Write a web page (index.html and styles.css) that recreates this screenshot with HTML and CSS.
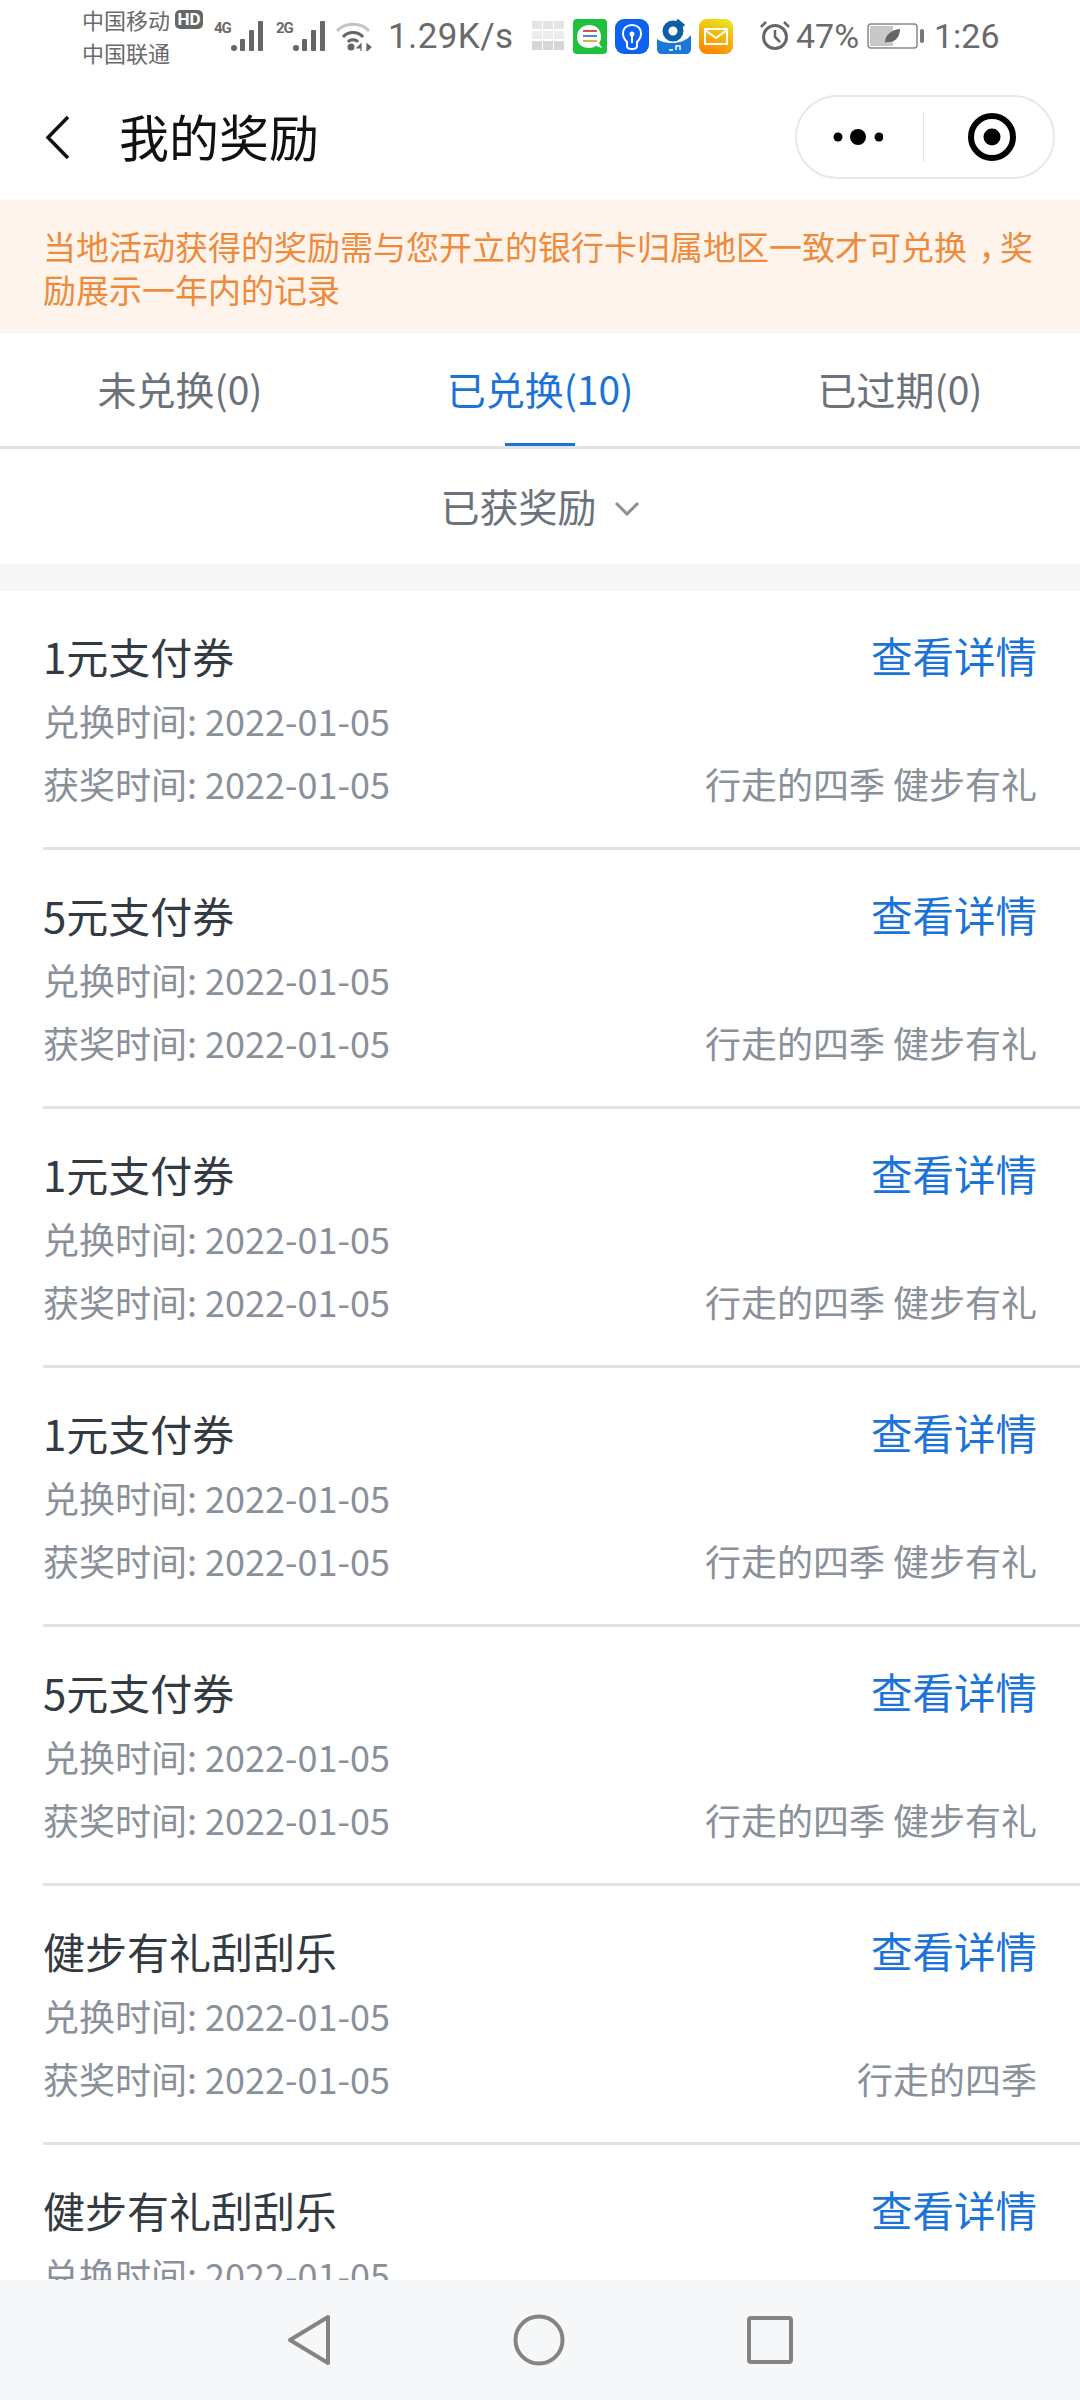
FILE: index.html
```html
<!DOCTYPE html>
<html lang="zh-CN">

<head>
    <meta charset="UTF-8">
    <meta name="viewport" content="width=device-width, initial-scale=1.0">
    <title>我的奖励</title>
    <link rel="stylesheet" href="styles.css">
</head>

<body>
    <div class="page">
        <div class="status-bar">
            <div class="carriers">
                <div class="carrier-row">中国移动<span class="hd">HD</span></div>
                <div class="carrier-row">中国联通</div>
            </div>
            <div class="signal">
                <span class="net">4G</span>
                <svg width="33" height="30" viewBox="0 0 33 30" fill="#666">
                    <circle cx="3" cy="27" r="3"/>
                    <rect x="9" y="18" width="5" height="12" rx="1"/>
                    <rect x="18" y="9" width="5" height="21" rx="1"/>
                    <rect x="27" y="0" width="5" height="30" rx="1"/>
                </svg>
            </div>
            <div class="signal">
                <span class="net">2G</span>
                <svg width="33" height="30" viewBox="0 0 33 30" fill="#666">
                    <circle cx="3" cy="27" r="3"/>
                    <rect x="9" y="18" width="5" height="12" rx="1"/>
                    <rect x="18" y="9" width="5" height="21" rx="1"/>
                    <rect x="27" y="0" width="5" height="30" rx="1"/>
                </svg>
            </div>
            <svg class="wifi" width="37" height="30" viewBox="0 0 37 30" fill="none">
                <path d="M2 10 C10 1 26 1 34 10" stroke="#c4c4c4" stroke-width="3"/>
                <path d="M8 16 C13 10 23 10 28 16" stroke="#666" stroke-width="3"/>
                <path d="M13 21 C15 18 21 18 23 21" stroke="#666" stroke-width="3"/>
                <circle cx="16" cy="26" r="3.5" fill="#666"/>
                <path d="M26 23 L22 27 H26 Z M26 23 V30 M32 23 V30 L36 26 Z" fill="#666" stroke="#666" stroke-width="1.2"/>
            </svg>
            <span class="speed">1.29K/s</span>
            <svg class="grid-icon" width="33" height="30" viewBox="0 0 33 30" fill="#e4e4e4">
                <rect x="0" y="0" width="10" height="8"/><rect x="11" y="0" width="10" height="8"/><rect x="22" y="0" width="10" height="8"/>
                <rect x="0" y="10" width="10" height="8" fill="#ececec"/><rect x="11" y="10" width="10" height="8" fill="#ececec"/><rect x="22" y="10" width="10" height="8" fill="#ececec"/>
                <rect x="0" y="20" width="10" height="9" fill="#d6d6d6"/><rect x="11" y="20" width="10" height="9" fill="#d6d6d6"/><rect x="22" y="20" width="10" height="9" fill="#d6d6d6"/>
            </svg>
            <div class="app-icons">
                <svg width="34" height="35" viewBox="0 0 34 35">
                    <rect width="34" height="35" rx="4" fill="#1fc03b"/>
                    <path d="M16 6 C24 6 28 11 28 18 C28 21 27 23 26 24 L29 29 L23 27 C21 28 19 29 16 29 C9 29 4 25 4 18 C4 11 9 6 16 6 Z" fill="#fff"/>
                    <rect x="10" y="11" width="14" height="2" fill="#d9534f"/>
                    <rect x="10" y="16" width="14" height="2" fill="#3a8fd9"/>
                    <rect x="10" y="21" width="14" height="2" fill="#e0b040"/>
                </svg>
                <svg width="34" height="35" viewBox="0 0 34 35" fill="none">
                    <rect width="34" height="35" rx="9" fill="#0f62f0"/>
                    <path d="M12 23 C9 20 8 17 8 15 C8 9 12 6 17 6 C22 6 26 9 26 15 C26 17 25 20 22 23 V27 C22 29 20 30 17 30 C14 30 12 29 12 27 Z" stroke="#fff" stroke-width="2"/>
                    <path d="M17 24 V16" stroke="#fff" stroke-width="2"/>
                    <circle cx="17" cy="15" r="2.5" fill="#fff"/>
                </svg>
                <svg width="34" height="35" viewBox="0 0 34 35" fill="none">
                    <path d="M0 20 C8 26 26 26 34 16 V30 C34 33 32 35 29 35 H5 C2 35 0 33 0 30 Z" fill="#1c78d8"/>
                    <circle cx="16" cy="12" r="7.5" stroke="#0f5ea8" stroke-width="6"/>
                    <path d="M20 1 L27 7" stroke="#0f5ea8" stroke-width="3"/>
                    <path d="M12 31 H16 M19 31 V27 H23 V31" stroke="#fff" stroke-width="1.5"/>
                </svg>
                <svg width="34" height="35" viewBox="0 0 34 35" fill="none">
                    <defs>
                        <linearGradient id="mail-bg" x1="0.7" y1="0" x2="0.3" y2="1">
                            <stop offset="0" stop-color="#e8e41c"/>
                            <stop offset="1" stop-color="#ff8400"/>
                        </linearGradient>
                    </defs>
                    <rect width="34" height="35" rx="8" fill="url(#mail-bg)"/>
                    <rect x="6" y="10" width="22" height="15" stroke="#fff" stroke-width="2"/>
                    <path d="M6 11 L17 19 L28 11" stroke="#fff" stroke-width="2"/>
                </svg>
            </div>
            <svg class="alarm" width="30" height="30" viewBox="0 0 30 30" fill="none" stroke="#666">
                <circle cx="15" cy="16" r="11.5" stroke-width="3"/>
                <path d="M15 9 V16 L20 21" stroke-width="2.5"/>
                <path d="M1 6 L6 1 M24 1 L29 6" stroke-width="2.5"/>
            </svg>
            <span class="percent">47%</span>
            <svg class="battery" width="57" height="26" viewBox="0 0 57 26" fill="none">
                <rect x="1" y="1" width="49" height="24" rx="3" stroke="#888" stroke-width="1.5"/>
                <rect x="3" y="3" width="23" height="20" fill="#c8c8c8"/>
                <path d="M18 20 C18 12 24 7 33 6 C33 14 28 20 20 19 Z" fill="#666"/>
                <rect x="53" y="6" width="4" height="14" rx="2" fill="#777"/>
            </svg>
            <span class="clock">1:26</span>
        </div>

        <div class="nav-bar">
            <svg class="back" width="25" height="45" viewBox="0 0 25 45" fill="none">
                <path d="M23 2 L3 22.5 L23 43" stroke="#111" stroke-width="3.5"/>
            </svg>
            <h1 class="nav-title">我的奖励</h1>
            <div class="capsule">
                <div class="capsule-part more">
                    <svg width="50" height="18" viewBox="0 0 50 18" fill="#000">
                        <circle cx="5" cy="9" r="4.5"/>
                        <circle cx="25" cy="9" r="8"/>
                        <circle cx="46" cy="9" r="4.5"/>
                    </svg>
                </div>
                <div class="capsule-line"></div>
                <div class="capsule-part target">
                    <svg width="48" height="48" viewBox="0 0 48 48">
                        <circle cx="24" cy="24" r="21" fill="none" stroke="#000" stroke-width="6"/>
                        <circle cx="24" cy="24" r="8.5" fill="#000"/>
                    </svg>
                </div>
            </div>
        </div>

        <div class="notice">
            <div>当地活动获得的奖励需与您开立的银行卡归属地区一致才可兑换<span class="comma">，</span>奖</div>
            <div>励展示一年内的记录</div>
        </div>

        <div class="tabs">
            <div class="tab">未兑换(0)</div>
            <div class="tab active">已兑换(10)</div>
            <div class="tab">已过期(0)</div>
        </div>

        <div class="filter">
            已获奖励
            <svg width="26" height="16" viewBox="0 0 26 16" fill="none">
                <path d="M2 3 L13 14 L24 3" stroke="#8b9096" stroke-width="3"/>
            </svg>
        </div>

        <div class="list">
            <div class="item">
                <div class="row title-row"><span class="name">1元支付券</span><span class="link">查看详情</span></div>
                <div class="row">兑换时间: 2022-01-05</div>
                <div class="row"><span>获奖时间: 2022-01-05</span><span>行走的四季 健步有礼</span></div>
            </div>
            <div class="item">
                <div class="row title-row"><span class="name">5元支付券</span><span class="link">查看详情</span></div>
                <div class="row">兑换时间: 2022-01-05</div>
                <div class="row"><span>获奖时间: 2022-01-05</span><span>行走的四季 健步有礼</span></div>
            </div>
            <div class="item">
                <div class="row title-row"><span class="name">1元支付券</span><span class="link">查看详情</span></div>
                <div class="row">兑换时间: 2022-01-05</div>
                <div class="row"><span>获奖时间: 2022-01-05</span><span>行走的四季 健步有礼</span></div>
            </div>
            <div class="item">
                <div class="row title-row"><span class="name">1元支付券</span><span class="link">查看详情</span></div>
                <div class="row">兑换时间: 2022-01-05</div>
                <div class="row"><span>获奖时间: 2022-01-05</span><span>行走的四季 健步有礼</span></div>
            </div>
            <div class="item">
                <div class="row title-row"><span class="name">5元支付券</span><span class="link">查看详情</span></div>
                <div class="row">兑换时间: 2022-01-05</div>
                <div class="row"><span>获奖时间: 2022-01-05</span><span>行走的四季 健步有礼</span></div>
            </div>
            <div class="item">
                <div class="row title-row"><span class="name">健步有礼刮刮乐</span><span class="link">查看详情</span></div>
                <div class="row">兑换时间: 2022-01-05</div>
                <div class="row"><span>获奖时间: 2022-01-05</span><span>行走的四季</span></div>
            </div>
            <div class="item">
                <div class="row title-row"><span class="name">健步有礼刮刮乐</span><span class="link">查看详情</span></div>
                <div class="row">兑换时间: 2022-01-05</div>
            </div>
        </div>

        <div class="system-nav">
            <svg width="44" height="52" viewBox="0 0 44 52" fill="none">
                <path d="M41 3 V49 L3 26 Z" stroke="#848484" stroke-width="4" stroke-linejoin="round"/>
            </svg>
            <svg width="52" height="52" viewBox="0 0 52 52" fill="none">
                <circle cx="26" cy="26" r="23.5" stroke="#848484" stroke-width="4"/>
            </svg>
            <svg width="46" height="48" viewBox="0 0 46 48" fill="none">
                <rect x="2" y="2" width="42" height="44" rx="2" stroke="#848484" stroke-width="4"/>
            </svg>
        </div>
    </div>
</body>

</html>
```

FILE: styles.css
```css
html {
    font-family: "Noto Sans CJK SC", "Noto Sans", sans-serif;
}

body {
    margin: 0;
    background: #fff;
}

.page {
    height: 2400px;
    display: flex;
    flex-direction: column;
    overflow: hidden;
}

/* status bar */
.status-bar {
    height: 72px;
    flex: none;
    display: flex;
    align-items: center;
    padding: 0 0 4px 82px;
    color: #6a6a6a;
    font-family: Roboto, sans-serif;
}

.carriers {
    width: 132px;
    font-family: "Noto Sans CJK SC", sans-serif;
    font-size: 22px;
    line-height: 33px;
}

.carrier-row {
    display: flex;
    align-items: center;
}

.hd {
    margin-left: 5px;
    width: 28px;
    height: 19px;
    background: #666;
    border-radius: 5px;
    color: #fff;
    font-size: 17px;
    line-height: 19px;
    font-weight: 700;
    text-align: center;
    font-family: Roboto, sans-serif;
}

.signal {
    display: flex;
    width: 62px;
}

.net {
    width: 17px;
    height: 30px;
    font-size: 15px;
    line-height: 14px;
    font-weight: 700;
    letter-spacing: -1px;
}

.wifi {
    margin-left: -3px;
}

.speed {
    width: 144px;
    margin-left: 16px;
    font-size: 35px;
    letter-spacing: 0.4px;
}

.grid-icon {
    flex: none;
}

.app-icons {
    display: flex;
    gap: 8px;
    margin-left: 8px;
}

.alarm {
    margin-left: 27px;
}

.percent {
    width: 71px;
    margin-left: 6px;
    font-size: 34px;
}

.battery {
    flex: none;
}

.clock {
    margin-left: 10px;
    font-size: 34px;
}

/* nav bar */
.nav-bar {
    height: 124px;
    flex: none;
    display: flex;
    align-items: center;
    box-sizing: border-box;
    padding: 0 25px 2px 45px;
}

.nav-title {
    flex: 1;
    margin: 0 0 4px 49px;
    font-size: 50px;
    font-weight: 400;
    color: #111;
}

.capsule {
    width: 260px;
    height: 84px;
    box-sizing: border-box;
    display: flex;
    align-items: center;
    border: 2px solid #e8e8e8;
    border-radius: 42px;
}

.capsule-part {
    display: flex;
    justify-content: center;
}

.capsule-part.more {
    width: 126px;
    box-sizing: border-box;
    padding-right: 4px;
}

.capsule-part.target {
    flex: 1;
    padding-left: 6px;
}

.capsule-line {
    width: 1px;
    height: 50px;
    background: #e4e4e4;
}

/* notice */
.notice {
    height: 133px;
    flex: none;
    box-sizing: border-box;
    padding: 25px 0 0 43px;
    background: #fff4ec;
    color: #ee8a3c;
    font-size: 33px;
    line-height: 43px;
}

.comma {
    margin-left: 0.35em;
    letter-spacing: -0.35em;
}

/* tabs */
.tabs {
    height: 113px;
    flex: none;
    display: flex;
    border-bottom: 3px solid #e2e3e5;
}

.tab {
    flex: 1;
    position: relative;
    text-align: center;
    font-size: 39px;
    line-height: 110px;
    color: #6c727a;
}

.tab.active {
    color: #1a73d8;
}

.tab.active::after {
    content: "";
    position: absolute;
    left: 145px;
    bottom: 0;
    width: 70px;
    height: 3px;
    background: #1a73d8;
}

.filter {
    height: 111px;
    padding-bottom: 4px;
    flex: none;
    display: flex;
    justify-content: center;
    align-items: center;
    gap: 17px;
    font-size: 39px;
    color: #6c727a;
    border-bottom: 27px solid #f5f6f8;
}

.filter svg {
    margin-top: 6px;
}

/* reward list */
.list {
    flex: 1;
    min-height: 0;
    overflow: hidden;
}

.item {
    margin-left: 43px;
    padding: 34px 43px 33px 0;
    border-bottom: 3px solid #e2e3e5;
}

.row {
    display: flex;
    justify-content: space-between;
    align-items: center;
    height: 63px;
    font-size: 36px;
    color: #8a9099;
    white-space: nowrap;
}

.title-row {
    height: 60px;
    margin-bottom: 3px;
    font-size: 42px;
}

.name {
    color: #333a42;
}

.link {
    color: #1a73d8;
    font-size: 41.5px;
}

/* android buttons */
.system-nav {
    height: 120px;
    flex: none;
    display: flex;
    align-items: center;
    justify-content: center;
    gap: 182px;
    background: #f6f7f8;
}
```
